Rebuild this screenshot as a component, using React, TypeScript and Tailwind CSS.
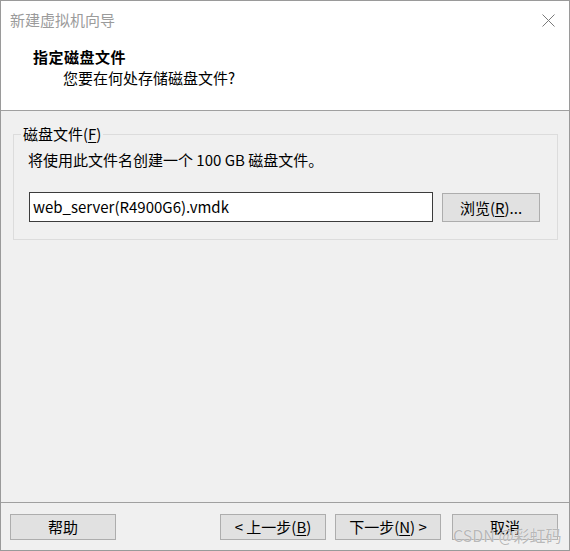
import React from "react";

const font = "font-['Noto_Sans_CJK_SC','Noto_Sans',sans-serif]";

function Btn({ children, w = "w-[106px]" }: { children: React.ReactNode; w?: string }) {
  return (
    <div
      className={`${w} h-[26px] bg-[#e1e1e1] border border-[#adadad] flex items-center justify-center text-[15px] leading-[20px] text-black`}
    >
      {children}
    </div>
  );
}

export default function App() {
  return (
    <div className={`${font} w-[570px] h-[551px] border border-[#9a9a9a] flex flex-col bg-white relative`}>
      {/* header */}
      <div className="h-[110px] bg-white border-b border-[#a0a0a0] flex flex-col shrink-0">
        <div className="flex justify-between items-start pt-[9px] pl-[9px] pr-[14px]">
          <span className="text-[15px] leading-[20px] text-[#9b9b9b]">新建虚拟机向导</span>
          <svg width="13" height="13" viewBox="0 0 13 13" className="mt-[4px]">
            <path d="M0.5 0.5 L12.5 12.5 M12.5 0.5 L0.5 12.5" stroke="#7a7a7a" strokeWidth="1" fill="none" />
          </svg>
        </div>
        <div className="mt-[17px] pl-[32px] text-[15px] leading-[20px] font-bold text-black tracking-[0.5px]">指定磁盘文件</div>
        <div className="mt-[1px] pl-[62px] text-[15px] leading-[20px] text-black">您要在何处存储磁盘文件?</div>
      </div>

      {/* body */}
      <div className="flex-1 bg-[#f0f0f0] pt-[23px] pl-[12px] pr-[11px]">
        <div className="relative border border-[#dcdcdc] h-[106px] pt-[15px] pl-[14px]">
          <span className="absolute -top-[11px] left-[7px] bg-[#f0f0f0] px-[2px] text-[15px] leading-[20px] text-black">
            磁盘文件(<span className="underline underline-offset-2">F</span>)
          </span>
          <div className="text-[15px] leading-[20px] text-black">将使用此文件名创建一个 100 GB 磁盘文件。</div>
          <div className="flex items-start mt-[22px] ml-[1px]">
            <div className="w-[404px] h-[30px] bg-white border border-[#3c3c3c] flex items-center pl-[3px] text-[15px] leading-[20px] text-black">
              web_server(R4900G6).vmdk
            </div>
            <div className="ml-[9px] mt-[1px] w-[98px] h-[29px] bg-[#e1e1e1] border border-[#adadad] flex items-center justify-center text-[15px] leading-[20px] text-black">
              浏览(<span className="underline underline-offset-2">R</span>)...
            </div>
          </div>
        </div>
      </div>

      {/* footer */}
      <div className="h-[48px] shrink-0 bg-[#f0f0f0] border-t border-[#a0a0a0] flex items-start pt-[11px] pl-[9px] pr-[11px]">
        <Btn>帮助</Btn>
        <div className="flex-1" />
        <Btn>
          &lt; 上一步(<span className="underline underline-offset-2">B</span>)
        </Btn>
        <div className="w-[9px]" />
        <Btn>
          下一步(<span className="underline underline-offset-2">N</span>) &gt;
        </Btn>
        <div className="w-[11px]" />
        <Btn>取消</Btn>
      </div>

      {/* watermark */}
      <div className="absolute left-[452px] top-[524px] whitespace-nowrap text-[16px] leading-[20px] text-[#a6a6a6]/80 [text-shadow:0_0_1px_#ffffff] pointer-events-none">
        CSDN @彩虹码
      </div>
    </div>
  );
}
